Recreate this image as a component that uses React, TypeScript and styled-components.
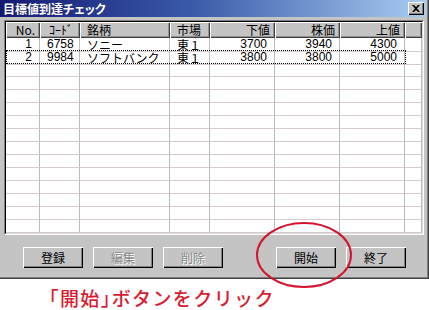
import React from "react";
import styled, { createGlobalStyle, css } from "styled-components";

const GlobalStyle = createGlobalStyle`
  html, body {
    margin: 0;
    padding: 0;
    background: #ffffff;
  }
  body {
    font-family: "Noto Sans CJK JP", "Liberation Sans", sans-serif;
    font-size: 12px;
  }
`;

const Page = styled.div`
  position: relative;
  width: 429px;
  height: 310px;
  overflow: hidden;
`;

const Window = styled.div`
  width: 429px;
  height: 279px;
  box-sizing: border-box;
  background: #c4c4c4;
  display: flex;
  flex-direction: column;
  box-shadow: inset -1px -1px 0 #404040, inset -2px -2px 0 #808080;
`;

const TitleBar = styled.div`
  width: 426px;
  height: 17px;
  display: flex;
  align-items: center;
  justify-content: space-between;
  background: linear-gradient(to right, #141a72 0%, #3a5aa8 45%, #a8ccf2 100%);
`;

const Title = styled.span`
  color: #ffffff;
  font-weight: bold;
  font-size: 12px;
  line-height: 17px;
  padding-left: 3px;
  font-feature-settings: "palt";
`;

const CloseButton = styled.div`
  width: 16px;
  height: 13px;
  margin-right: 2px;
  box-sizing: border-box;
  background: #c4c4c4;
  display: flex;
  align-items: center;
  justify-content: center;
  box-shadow: inset 1px 1px 0 #ffffff, inset -1px -1px 0 #000000,
    inset -2px -2px 0 #808080;
`;

const GridFrame = styled.div`
  margin: 3px 0 0 4px;
  width: 420px;
  height: 215px;
  box-sizing: border-box;
  background: #ffffff;
  border-top: 1px solid #808080;
  border-left: 1px solid #808080;
  border-right: 1px solid #ffffff;
  border-bottom: 1px solid #ffffff;
  overflow: hidden;
`;

const GridInner = styled.div`
  height: 100%;
  box-sizing: border-box;
  border-top: 1px solid #000000;
  border-left: 1px solid #000000;
  border-right: 1px solid #dcdcdc;
  border-bottom: 1px solid #dcdcdc;
`;

const columns = "34px 40px 90px 40px 65px 65px 65px 1fr";

const HeaderRow = styled.div`
  display: grid;
  grid-template-columns: ${columns};
  height: 16px;
`;

const HeaderCell = styled.div<{ $align: "left" | "right" | "center" }>`
  box-sizing: border-box;
  background: #c4c4c4;
  box-shadow: inset 1px 1px 0 #ffffff, inset -1px -1px 0 #404040,
    inset -2px -2px 0 #909090;
  font-size: 12px;
  line-height: 16px;
  color: #000;
  white-space: nowrap;
  text-align: ${(p) => p.$align};
  padding: 0 5px 0 7px;
`;

const DataRow = styled.div<{ $focused?: boolean }>`
  position: relative;
  display: grid;
  grid-template-columns: ${columns};
  height: 13px;
  ${(p) =>
    p.$focused &&
    css`
      &::after {
        content: "";
        position: absolute;
        left: 0;
        top: -1px;
        width: 400px;
        height: 14px;
        box-sizing: border-box;
        border: 1px dotted #000000;
        pointer-events: none;
      }
    `}
`;

const Cell = styled.div<{ $align: "left" | "right" | "center"; $num?: boolean }>`
  box-sizing: border-box;
  border-right: 1px solid #bcbcbc;
  border-bottom: 1px solid #d6caca;
  font-family: ${(p) =>
    p.$num
      ? `"Liberation Sans Narrow", "Liberation Sans", sans-serif`
      : `"Noto Sans CJK JP", sans-serif`};
  font-size: 12px;
  line-height: 13px;
  color: #000;
  white-space: nowrap;
  text-align: ${(p) => p.$align};
  padding: 0 7px;
`;

const ButtonBar = styled.div`
  margin-top: 12px;
  padding: 0 23px;
  display: flex;
  justify-content: space-between;
`;

const ButtonGroup = styled.div`
  display: flex;
  gap: 10px;
`;

const Button = styled.div<{ $disabled?: boolean }>`
  width: 60px;
  height: 21px;
  box-sizing: border-box;
  background: #c4c4c4;
  box-shadow: inset 1px 1px 0 #ffffff, inset -1px -1px 0 #000000,
    inset -2px -2px 0 #808080;
  display: flex;
  align-items: center;
  justify-content: center;
  font-size: 12px;
  color: ${(p) => (p.$disabled ? "#8a8a8a" : "#000000")};
  text-shadow: ${(p) => (p.$disabled ? "1px 1px 0 #ffffff" : "none")};
`;

const Caption = styled.div`
  margin: 8px 0 0 49px;
  color: #d81e32;
  font-size: 19px;
  font-weight: 500;
  line-height: 22px;
  letter-spacing: 1.4px;
  white-space: nowrap;
`;

const Bracket = styled.span`
  font-feature-settings: "halt";
`;

const Highlight = styled.svg`
  position: absolute;
  left: 255px;
  top: 221px;
`;

type Align = "left" | "right" | "center";

const headers: { label: string; align: Align }[] = [
  { label: "No.", align: "right" },
  { label: "ｺｰﾄﾞ", align: "center" },
  { label: "銘柄", align: "left" },
  { label: "市場", align: "left" },
  { label: "下値", align: "right" },
  { label: "株価", align: "right" },
  { label: "上値", align: "right" },
  { label: "", align: "left" },
];

const rows = [
  ["1", "6758", "ソニー", "東１", "3700", "3940", "4300"],
  ["2", "9984", "ソフトバンク", "東１", "3800", "3800", "5000"],
];

const cellAlign: Align[] = ["right", "center", "left", "left", "right", "right", "right"];
const numeric = [true, true, false, false, true, true, true];

const App: React.FC = () => {
  const blankRows = Array.from({ length: 13 });
  return (
    <Page>
      <GlobalStyle />
      <Window>
        <TitleBar>
          <Title>目標値到達チェック</Title>
          <CloseButton>
            <svg width="8" height="7" viewBox="0 0 8 7">
              <path
                d="M0 0h2l2 2 2-2h2L5 3.5 8 7H6L4 5 2 7H0l3-3.5z"
                fill="#000"
              />
            </svg>
          </CloseButton>
        </TitleBar>
        <GridFrame>
          <GridInner>
            <HeaderRow>
              {headers.map((h, i) => (
                <HeaderCell key={i} $align={h.align}>
                  {h.label}
                </HeaderCell>
              ))}
            </HeaderRow>
            {rows.map((r, ri) => (
              <DataRow key={ri} $focused={ri === 1}>
                {r.map((v, ci) => (
                  <Cell key={ci} $align={cellAlign[ci]} $num={numeric[ci]}>
                    {v}
                  </Cell>
                ))}
                <Cell $align="left" />
              </DataRow>
            ))}
            {blankRows.map((_, ri) => (
              <DataRow key={`b${ri}`}>
                {headers.map((_, ci) => (
                  <Cell key={ci} $align="left" />
                ))}
              </DataRow>
            ))}
          </GridInner>
        </GridFrame>
        <ButtonBar>
          <ButtonGroup>
            <Button>登録</Button>
            <Button $disabled>編集</Button>
            <Button $disabled>削除</Button>
          </ButtonGroup>
          <ButtonGroup>
            <Button>開始</Button>
            <Button>終了</Button>
          </ButtonGroup>
        </ButtonBar>
      </Window>
      <Caption>
        <Bracket>「</Bracket>開始<Bracket>」</Bracket>ボタンをクリック
      </Caption>
      <Highlight width="100" height="70" viewBox="0 0 100 70">
        <ellipse
          cx="49"
          cy="34"
          rx="47"
          ry="32"
          fill="none"
          stroke="#d4142e"
          strokeWidth="2"
        />
      </Highlight>
    </Page>
  );
};

export default App;
